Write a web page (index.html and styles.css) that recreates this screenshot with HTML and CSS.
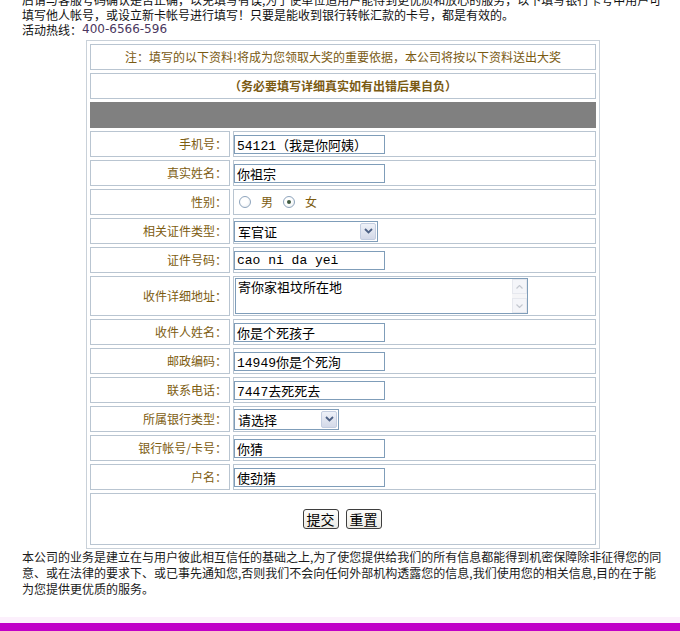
FILE: index.html
```html
<!DOCTYPE html>
<html lang="zh-CN">
<head>
<meta charset="utf-8">
<title>资料填写</title>
<link rel="stylesheet" href="styles.css">
</head>
<body>
<div class="page">
  <div class="intro">
    <div class="line">后请与客服号码确认是否正确，以免填写有误,为了使单位适用户能得到更优质和放心的服务，以下填写银行卡号中用户可</div>
    <div class="line">填写他人帐号，或设立新卡帐号进行填写！只要是能收到银行转帐汇款的卡号，都是有效的。</div>
    <div class="line">活动热线：<span class="hotline">400-6566-596</span></div>
  </div>

  <form class="form">
    <div class="cell full note">注：填写的以下资料!将成为您领取大奖的重要依据，本公司将按以下资料送出大奖</div>
    <div class="cell full note strong">（务必要填写详细真实如有出错后果自负）</div>
    <div class="cell full bar"></div>

    <div class="cell label">手机号：</div>
    <div class="cell value"><input class="text" type="text" value="54121（我是你阿姨）"></div>

    <div class="cell label">真实姓名：</div>
    <div class="cell value"><input class="text" type="text" value="你祖宗"></div>

    <div class="cell label">性别：</div>
    <div class="cell value radios">
      <span class="radio"></span><span class="opt">男</span>
      <span class="radio checked"></span><span class="opt">女</span>
    </div>

    <div class="cell label">相关证件类型：</div>
    <div class="cell value">
      <span class="selectwrap wide">
        <select class="select"><option>军官证</option></select>
        <span class="arrow"><svg width="9" height="6" viewBox="0 0 9 6"><path d="M1 1 L4.5 4.5 L8 1" fill="none" stroke="#4d6185" stroke-width="1.8"/></svg></span>
      </span>
    </div>

    <div class="cell label">证件号码：</div>
    <div class="cell value"><input class="text" type="text" value="cao ni da yei"></div>

    <div class="cell label">收件详细地址：</div>
    <div class="cell value">
      <span class="areawrap">
        <textarea class="area">寄你家祖坟所在地</textarea>
        <span class="scroll">
          <span class="sbtn"><svg width="7" height="4" viewBox="0 0 7 4"><path d="M0.5 3.5 L3.5 0.5 L6.5 3.5" fill="none" stroke="#c4c8d0" stroke-width="1.2"/></svg></span>
          <span class="sbtn"><svg width="7" height="4" viewBox="0 0 7 4"><path d="M0.5 0.5 L3.5 3.5 L6.5 0.5" fill="none" stroke="#c4c8d0" stroke-width="1.2"/></svg></span>
        </span>
      </span>
    </div>

    <div class="cell label">收件人姓名：</div>
    <div class="cell value"><input class="text" type="text" value="你是个死孩子"></div>

    <div class="cell label">邮政编码：</div>
    <div class="cell value"><input class="text" type="text" value="14949你是个死洵"></div>

    <div class="cell label">联系电话：</div>
    <div class="cell value"><input class="text" type="text" value="7447去死死去"></div>

    <div class="cell label">所属银行类型：</div>
    <div class="cell value">
      <span class="selectwrap narrow">
        <select class="select"><option>请选择</option></select>
        <span class="arrow"><svg width="9" height="6" viewBox="0 0 9 6"><path d="M1 1 L4.5 4.5 L8 1" fill="none" stroke="#4d6185" stroke-width="1.8"/></svg></span>
      </span>
    </div>

    <div class="cell label">银行帐号/卡号：</div>
    <div class="cell value"><input class="text" type="text" value="你猜"></div>

    <div class="cell label">户名：</div>
    <div class="cell value"><input class="text" type="text" value="使劲猜"></div>

    <div class="cell full actions">
      <button class="btn" type="button">提交</button>
      <button class="btn" type="reset">重置</button>
    </div>
  </form>

  <div class="footer">
    <div class="fline">本公司的业务是建立在与用户彼此相互信任的基础之上,为了使您提供给我们的所有信息都能得到机密保障除非征得您的同</div>
    <div class="fline">意、或在法律的要求下、或已事先通知您,否则我们不会向任何外部机构透露您的信息,我们使用您的相关信息,目的在于能</div>
    <div class="fline">为您提供更优质的服务。</div>
  </div>
</div>
<div class="tint"></div>
<div class="purple"></div>
</body>
</html>
```

FILE: styles.css
```css
html, body {
  margin: 0;
  padding: 0;
  background: #ffffff;
  overflow: hidden;
}
body {
  font-family: "Noto Sans CJK SC", "Noto Sans", sans-serif;
  font-size: 12px;
  color: #111;
}
.page {
  width: 642px;
  padding-left: 22px;
}
.intro {
  margin-top: -8px;
  color: #111;
}
.line {
  height: 15px;
  line-height: 15px;
  white-space: nowrap;
}
.hotline {
  font-family: "DejaVu Sans", sans-serif;
  font-size: 12px;
  line-height: 15px;
  vertical-align: top;
  color: #4a3760;
}
.form {
  margin: 3px 0 0 64px;
  width: 514px;
  box-sizing: border-box;
  border: 1px solid #c9d1d9;
  padding: 3px;
  display: grid;
  grid-template-columns: 140px 363px;
  grid-template-rows: repeat(8, 26px) 40px repeat(6, 26px) 52px;
  gap: 3px;
}
.cell {
  box-sizing: border-box;
  border: 1px solid #b9c5d1;
  background: #fff;
  display: flex;
  align-items: center;
  line-height: 14px;
  padding-bottom: 1px;
}
.full {
  grid-column: 1 / 3;
}
.note {
  justify-content: center;
  color: #7a5a12;
}
.strong {
  font-weight: 700;
  color: #7a5a12;
}
.bar {
  background: #808080;
  border-color: #808080;
}
.label {
  justify-content: flex-end;
  padding-right: 2px;
  color: #7d5c10;
}
.value {
  padding-left: 0;
  padding-bottom: 0;
}
.text {
  box-sizing: border-box;
  width: 151px;
  height: 19px;
  margin: 0;
  padding: 0 2px;
  border: 1px solid #7f9db9;
  font-family: "Liberation Mono", "Noto Sans CJK SC", monospace;
  font-size: 13px;
  color: #000;
  background: #fff;
}
.radios {
  padding-left: 5px;
}
.radio {
  box-sizing: border-box;
  width: 12px;
  height: 12px;
  border: 1px solid #8ea4bc;
  border-radius: 50%;
  background: radial-gradient(circle at 40% 40%, #ffffff 40%, #e4e8ec 100%);
  display: inline-flex;
  align-items: center;
  justify-content: center;
}
.radio.checked::after {
  content: "";
  width: 4px;
  height: 4px;
  border-radius: 50%;
  background: #3f5a40;
}
.opt {
  color: #7d5c10;
  margin: 0 10px;
}
.selectwrap {
  position: relative;
  display: inline-block;
  height: 21px;
}
.selectwrap.wide { width: 144px; }
.selectwrap.narrow { width: 105px; }
.select {
  box-sizing: border-box;
  width: 100%;
  height: 21px;
  margin: 0;
  padding: 0 0 0 3px;
  border: 1px solid #7f9db9;
  border-radius: 0;
  appearance: none;
  -webkit-appearance: none;
  background: #fff;
  font-family: "Noto Sans CJK SC", sans-serif;
  font-size: 13px;
  color: #000;
}
.arrow {
  position: absolute;
  top: 2px;
  right: 2px;
  width: 16px;
  height: 17px;
  box-sizing: border-box;
  border: 1px solid #c3cde0;
  border-radius: 2px;
  background: linear-gradient(#eef1f8, #d3d9e8);
  display: flex;
  align-items: center;
  justify-content: center;
  pointer-events: none;
}
.areawrap {
  position: relative;
  display: inline-block;
  width: 293px;
  height: 36px;
  margin-left: 1px;
}
.area {
  box-sizing: border-box;
  width: 293px;
  height: 36px;
  margin: 0;
  padding: 0 2px;
  border: 1px solid #7f9db9;
  resize: none;
  overflow: hidden;
  font-family: "Noto Sans CJK SC", sans-serif;
  font-size: 13px;
  line-height: 16px;
  color: #000;
  display: block;
}
.scroll {
  position: absolute;
  top: 1px;
  right: 1px;
  bottom: 1px;
  width: 15px;
  background: #f5f5f7;
  display: flex;
  flex-direction: column;
  justify-content: space-between;
}
.sbtn {
  height: 15px;
  box-sizing: border-box;
  border: 1px solid #e6e8ee;
  background: #f4f5f9;
  display: flex;
  align-items: center;
  justify-content: center;
}
.actions {
  justify-content: center;
  gap: 7px;
  padding-right: 2px;
}
.btn {
  box-sizing: border-box;
  width: 36px;
  height: 20px;
  margin: 0;
  padding: 0;
  border: 1px solid #3e3e3e;
  border-radius: 3px;
  background: linear-gradient(#fdfdfb, #ecebe6);
  font-family: "Noto Sans CJK SC", sans-serif;
  font-size: 14px;
  line-height: 18px;
  color: #000;
}
.footer {
  color: #1a1a1a;
}
.fline {
  height: 16px;
  line-height: 16px;
  white-space: nowrap;
}
.tint {
  margin-top: 20px;
  height: 6px;
  background: #fcf0fc;
}
.purple {
  height: 10px;
  background: #c000c8;
}
```
